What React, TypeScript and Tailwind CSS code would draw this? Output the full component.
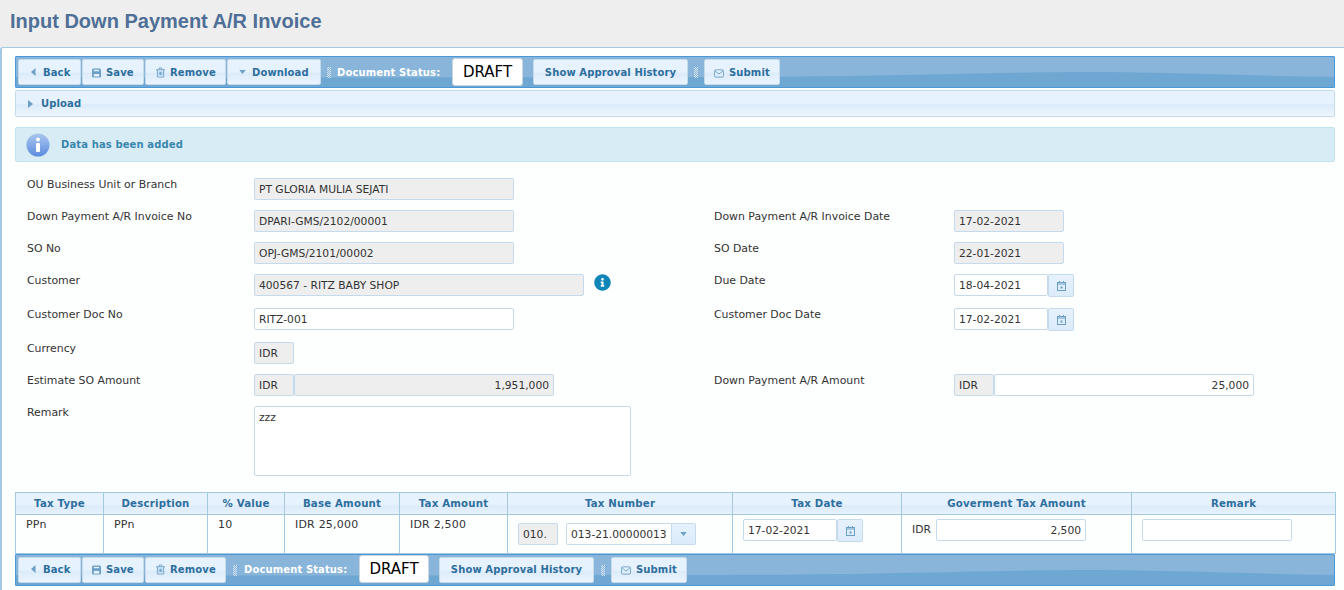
import { FaInfoCircle } from 'react-icons/fa';

const font = "font-['DejaVu_Sans',sans-serif] text-[10.7px]";
const barText = 'text-[10px] font-bold tracking-[0.12px]';

function BackIcon() {
  return (
    <svg width="5" height="8" viewBox="0 0 5 8" className="mr-[7px]">
      <path d="M4.5 0v8L0 4z" fill="#6b9fc8" />
    </svg>
  );
}

function SaveIcon() {
  return (
    <svg width="9" height="10" viewBox="0 0 10 10" className="mr-[5px] mt-[1px]">
      <path d="M1 0h8l1 1v8l-1 1H1L0 9V1z" fill="#6b9fc8" />
      <path d="M2 1.5h6v1.5H2z" fill="#e4f0fb" />
      <path d="M2 6h6v3H2z" fill="#e4f0fb" />
    </svg>
  );
}

function TrashIcon() {
  return (
    <svg width="9" height="11" viewBox="0 0 10 11" fill="none" stroke="#6b9fc8" className="mr-[5px] mt-[1px]">
      <path d="M0 2.5h10M3.5 2.5V.5h3v2M1.5 2.5v8h7v-8M3.5 4.5v4M5 4.5v4M6.5 4.5v4" />
    </svg>
  );
}

function DownIcon() {
  return (
    <svg width="7" height="4" viewBox="0 0 8 5">
      <path d="M0 0h8L4 5z" fill="#6b9fc8" />
    </svg>
  );
}

function MailIcon() {
  return (
    <svg width="10" height="9" viewBox="0 0 11 9" fill="none" stroke="#6b9fc8" className="mr-[5px] mt-[2px]">
      <rect x="0.5" y="0.5" width="10" height="8" rx="1.5" />
      <path d="M1 1.5l4.5 3.5L10 1.5" />
    </svg>
  );
}

function CalendarIcon() {
  return (
    <svg width="9" height="10" viewBox="0 0 9 10" fill="none" stroke="#6b9fc8">
      <rect x="0.5" y="1.5" width="8" height="8" />
      <path d="M0 3h9M2.5 0v2M6.5 0v2" />
      <path d="M3.5 5.5h2v2h-2z" fill="#6b9fc8" stroke="none" />
    </svg>
  );
}

function Grip() {
  return (
    <div className="w-[4px] h-[11px] bg-[repeating-conic-gradient(#d3e4f2_0_25%,transparent_0_50%)] bg-[length:2px_2px]" />
  );
}

function ToolButton({ children, className }: { children: React.ReactNode; className: string }) {
  return (
    <div
      className={`h-[26px] flex items-center rounded-[2px] border border-[#c5dbec] bg-[linear-gradient(#e6f2fd_0%,#e6f2fd_50%,#dcebfa_55%,#eaf4fe_100%)] text-[#2e6e9e] ${barText} ${className}`}
    >
      {children}
    </div>
  );
}

function Toolbar({ download, bottom }: { download?: boolean; bottom?: boolean }) {
  const lift = bottom ? 'pb-[2px]' : '';
  return (
    <div className={`relative overflow-hidden ml-[15px] mr-[9px] h-[32px] border border-[#4a98d8] rounded-[1px] bg-[#88b5d9] flex items-center pl-[2px] ${font}`}>
      <svg className="absolute inset-0 w-full h-full" viewBox="0 0 1320 30" preserveAspectRatio="none">
        <path d="M0 20C300 21 480 20 700 20C850 20 960 16 1060 15C1150 15 1250 19 1320 20V30H0z" fill="#6fa7d3" />
      </svg>
      <div className="relative flex items-center">
        <ToolButton className={`w-[63px] pl-[12px] ${lift}`}><BackIcon />Back</ToolButton>
        <ToolButton className={`ml-[1px] w-[62px] pl-[9px] ${lift}`}><SaveIcon />Save</ToolButton>
        <ToolButton className={`ml-[1px] w-[81px] pl-[10px] ${lift}`}><TrashIcon />Remove</ToolButton>
        {download && (
          <ToolButton className="ml-[1px] w-[94px] pl-[11px]">
            <span className="mr-[6px] flex"><DownIcon /></span>Download
          </ToolButton>
        )}
        <div className={bottom ? 'ml-[7px]' : 'ml-[6px]'}><Grip /></div>
        <span className={`w-[103px] whitespace-nowrap text-white ${barText} ${bottom ? 'ml-[7px] -mt-[2px]' : 'ml-[6px]'}`}>Document Status:</span>
        <div className={`h-[28px] flex items-center justify-center rounded-[3px] border border-[#c9d6e2] bg-white text-[15px] text-black ${bottom ? 'ml-[12px] w-[70px] -mt-[2px]' : 'ml-[12px] w-[71px]'}`}>
          DRAFT
        </div>
        <ToolButton className={`ml-[10px] w-[155px] justify-center ${lift}`}>Show Approval History</ToolButton>
        <div className={bottom ? 'ml-[7px]' : 'ml-[6px]'}><Grip /></div>
        <ToolButton className={`ml-[6px] w-[76px] pl-[9px] ${lift}`}><MailIcon />Submit</ToolButton>
      </div>
    </div>
  );
}

function Field({ children, className, right, readOnly }: { children?: React.ReactNode; className: string; right?: boolean; readOnly?: boolean }) {
  return (
    <div
      className={`h-[22px] shrink-0 flex items-center px-[4px] pt-[2px] rounded-[2px] border border-[#c5dbec] text-[#333] ${readOnly ? 'bg-[#eeeeee]' : 'bg-white'} ${right ? 'justify-end' : ''} ${className}`}
    >
      {children}
    </div>
  );
}

function CalButton() {
  return (
    <div className="w-[26px] h-[23px] shrink-0 flex items-center justify-center rounded-[2px] border border-[#c5dbec] bg-[linear-gradient(#e6f2fd,#dcebfa)]">
      <CalendarIcon />
    </div>
  );
}

function Row({ label, left, rightLabel, right, className }: { label: string; left: React.ReactNode; rightLabel?: string; right?: React.ReactNode; className: string }) {
  return (
    <div className={`flex pl-[27px] text-[#333] ${className}`}>
      <div className="w-[227px] text-[10.9px] leading-[13px]">{label}</div>
      <div className="w-[460px] flex items-start">{left}</div>
      <div className="w-[240px] text-[10.9px] leading-[13px]">{rightLabel}</div>
      <div className="flex items-start">{right}</div>
    </div>
  );
}

function Th({ children }: { children: React.ReactNode }) {
  return (
    <th className="h-[22px] p-0 border border-[#a6c9e2] bg-[linear-gradient(#e6f2fd_0%,#e6f2fd_50%,#dcebfa_60%,#e6f2fd_100%)] text-[10.2px] font-bold text-center tracking-[0.2px] text-[#2e6e9e]">
      {children}
    </th>
  );
}

function Td({ children, text }: { children?: React.ReactNode; text?: boolean }) {
  return (
    <td className={`h-[39px] p-0 border border-[#a6c9e2] align-top text-[#333] ${text ? 'pl-[10px] pt-[3px] text-[11px] leading-[13px] tracking-[0.2px]' : ''}`}>
      {children}
    </td>
  );
}

export default function App() {
  return (
    <div className={`bg-[#eeeeee] ${font}`}>
      <div className="h-[47px] pl-[10px] pt-[9px] font-['Liberation_Sans',sans-serif] text-[20px] leading-[24px] font-bold text-[#4f6f97]">
        Input Down Payment A/R Invoice
      </div>
      <div className="h-[543px] overflow-hidden border-t border-l-2 border-[#a6c9e2] rounded-tl-[3px] bg-[#fdfefe] pt-[8px]">
        <div className="-ml-[2px]">
          <Toolbar download />
          <div className={`ml-[15px] mr-[9px] mt-[2px] h-[27px] flex items-center pl-[12px] rounded-[2px] border border-[#c5dbec] bg-[linear-gradient(#e6f2fd_0%,#e6f2fd_50%,#dcebfa_55%,#eef6fe_100%)] text-[#2e6e9e] ${barText}`}>
            <svg width="5" height="8" viewBox="0 0 5 8" className="mr-[8px]">
              <path d="M0 0v8l5-4z" fill="#6b9fc8" />
            </svg>
            Upload
          </div>
          <div className={`ml-[15px] mr-[9px] mt-[10px] h-[35px] flex items-center pl-[10px] rounded-[2px] border border-[#bfe3ef] bg-[#d8ecf6] text-[#3a87ad] ${barText}`}>
            <svg width="24" height="25" viewBox="0 0 24 25" className="mr-[11px] mt-[2px]">
              <defs>
                <linearGradient id="msg-info" x1="0" y1="0" x2="0" y2="1">
                  <stop offset="0" stopColor="#a9c6ee" />
                  <stop offset="1" stopColor="#5d8ce0" />
                </linearGradient>
              </defs>
              <circle cx="12" cy="12" r="11.5" fill="url(#msg-info)" />
              <circle cx="12" cy="6.5" r="2" fill="#fff" />
              <rect x="10" y="10" width="4" height="9" rx="1" fill="#fff" />
            </svg>
            Data has been added
          </div>

          <div className="mt-[16px]">
            <Row
              className="h-[32px]"
              label="OU Business Unit or Branch"
              left={<Field readOnly className="w-[260px]">PT GLORIA MULIA SEJATI</Field>}
            />
            <Row
              className="h-[32px]"
              label="Down Payment A/R Invoice No"
              left={<Field readOnly className="w-[260px]">DPARI-GMS/2102/00001</Field>}
              rightLabel="Down Payment A/R Invoice Date"
              right={<Field readOnly className="w-[110px]">17-02-2021</Field>}
            />
            <Row
              className="h-[32px]"
              label="SO No"
              left={<Field readOnly className="w-[260px]">OPJ-GMS/2101/00002</Field>}
              rightLabel="SO Date"
              right={<Field readOnly className="w-[110px]">22-01-2021</Field>}
            />
            <Row
              className="h-[34px]"
              label="Customer"
              left={
                <>
                  <Field readOnly className="w-[330px]">400567 - RITZ BABY SHOP</Field>
                  <FaInfoCircle className="ml-[10px] text-[#0f85b8]" size={17} />
                </>
              }
              rightLabel="Due Date"
              right={
                <>
                  <Field className="w-[94px]">18-04-2021</Field>
                  <CalButton />
                </>
              }
            />
            <Row
              className="h-[34px]"
              label="Customer Doc No"
              left={<Field className="w-[260px]">RITZ-001</Field>}
              rightLabel="Customer Doc Date"
              right={
                <>
                  <Field className="w-[94px]">17-02-2021</Field>
                  <CalButton />
                </>
              }
            />
            <Row
              className="h-[32px]"
              label="Currency"
              left={<Field readOnly className="w-[40px]">IDR</Field>}
            />
            <Row
              className="h-[32px]"
              label="Estimate SO Amount"
              left={
                <>
                  <Field readOnly className="w-[40px]">IDR</Field>
                  <Field readOnly right className="w-[260px]">1,951,000</Field>
                </>
              }
              rightLabel="Down Payment A/R Amount"
              right={
                <>
                  <Field readOnly className="w-[40px]">IDR</Field>
                  <Field right className="w-[260px]">25,000</Field>
                </>
              }
            />
            <Row
              className="h-[86px]"
              label="Remark"
              left={
                <div className="w-[377px] h-[70px] rounded-[2px] border border-[#c5dbec] bg-white px-[4px] pt-[3px] text-[#333]">zzz</div>
              }
            />
          </div>

          <table className="ml-[15px] w-[1320px] table-fixed border-collapse">
            <colgroup>
              <col className="w-[88px]" />
              <col className="w-[104px]" />
              <col className="w-[77px]" />
              <col className="w-[115px]" />
              <col className="w-[108px]" />
              <col className="w-[225px]" />
              <col className="w-[169px]" />
              <col className="w-[230px]" />
              <col className="w-[204px]" />
            </colgroup>
            <thead>
              <tr>
                <Th>Tax Type</Th>
                <Th>Description</Th>
                <Th>% Value</Th>
                <Th>Base Amount</Th>
                <Th>Tax Amount</Th>
                <Th>Tax Number</Th>
                <Th>Tax Date</Th>
                <Th>Goverment Tax Amount</Th>
                <Th>Remark</Th>
              </tr>
            </thead>
            <tbody>
              <tr>
                <Td text>PPn</Td>
                <Td text>PPn</Td>
                <Td text>10</Td>
                <Td text>IDR 25,000</Td>
                <Td text>IDR 2,500</Td>
                <Td>
                  <div className="flex pl-[10px] pt-[8px]">
                    <Field readOnly className="w-[40px]">010.</Field>
                    <Field className="ml-[8px] w-[106px] rounded-r-none">013-21.00000013</Field>
                    <div className="w-[24px] h-[22px] flex items-center justify-center rounded-r-[2px] border border-l-0 border-[#c5dbec] bg-[linear-gradient(#e6f2fd,#dcebfa)]">
                      <DownIcon />
                    </div>
                  </div>
                </Td>
                <Td>
                  <div className="flex pl-[10px] pt-[4px]">
                    <Field className="w-[94px]">17-02-2021</Field>
                    <CalButton />
                  </div>
                </Td>
                <Td>
                  <div className="flex items-center pl-[10px] pt-[4px]">
                    <span className="w-[24px]">IDR</span>
                    <Field right className="w-[150px]">2,500</Field>
                  </div>
                </Td>
                <Td>
                  <div className="pl-[10px] pt-[4px]">
                    <Field className="w-[150px]" />
                  </div>
                </Td>
              </tr>
            </tbody>
          </table>
          <Toolbar bottom />
        </div>
      </div>
    </div>
  );
}
